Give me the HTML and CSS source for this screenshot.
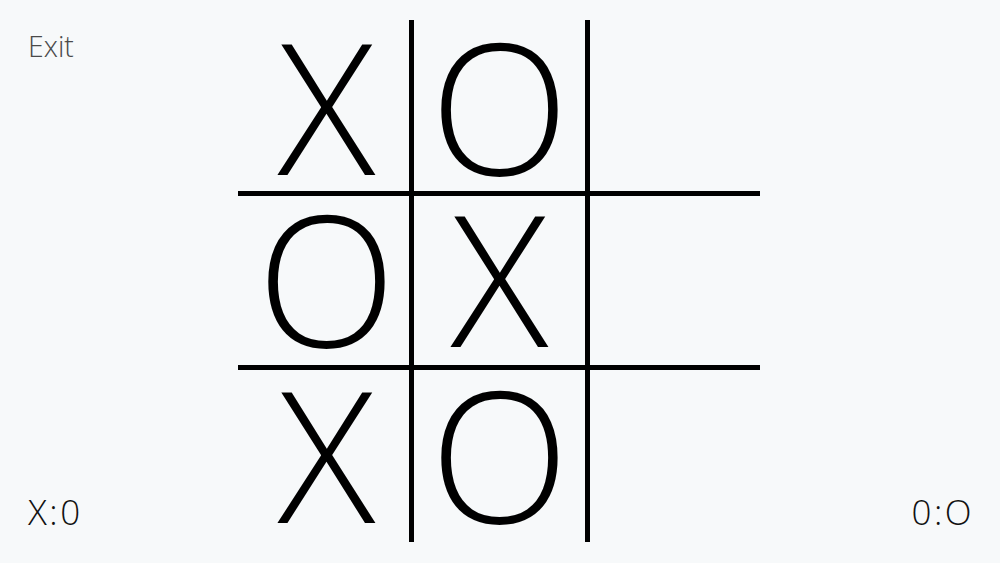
FILE: index.html
```html
<!DOCTYPE html>
<html lang="en">
<head>
<meta charset="utf-8">
<title>Tic Tac Toe</title>
<link rel="stylesheet" href="styles.css">
</head>
<body>
<div class="app">
  <div class="side side-left">
    <div class="exit">Exit</div>
    <div class="score">X:0</div>
  </div>
  <div class="board">
    <div class="cell r1 c1">X</div>
    <div class="cell r1">O</div>
    <div class="cell r1"></div>
    <div class="cell r2 c1">O</div>
    <div class="cell r2">X</div>
    <div class="cell r2"></div>
    <div class="cell r3 c1">X</div>
    <div class="cell r3">O</div>
    <div class="cell r3"></div>
  </div>
  <div class="side side-right">
    <div class="score score-right">0:O</div>
  </div>
</div>
</body>
</html>
```

FILE: styles.css
```css
html, body {
  margin: 0;
  padding: 0;
}

body {
  background: #f7f9fa;
  font-family: "Open Sans", "Liberation Sans", sans-serif;
  font-weight: 300;
  color: #111;
}

.app {
  width: 1000px;
  height: 563px;
  display: flex;
  flex-direction: row;
  overflow: hidden;
}

.side {
  display: flex;
  flex-direction: column;
  box-sizing: border-box;
}

.side-left {
  width: 238px;
  justify-content: space-between;
  align-items: flex-start;
  padding: 32px 0 34px 28px;
}

.side-right {
  width: 239px;
  justify-content: flex-end;
  align-items: flex-end;
  padding: 0 25px 34px 0;
}

.exit {
  font-size: 28.5px;
  line-height: 1;
  color: #4a4a4a;
}

.score {
  font-size: 35px;
  line-height: 1;
  letter-spacing: 2.5px;
  color: #111;
}

.board {
  margin-top: 20px;
  width: 522px;
  height: 522px;
  display: grid;
  grid-template-columns: 171px 171px 170px;
  grid-template-rows: 171px 169px 172px;
  gap: 5px;
  background: #000;
}

.cell {
  background: #f7f9fa;
  display: flex;
  align-items: flex-start;
  justify-content: center;
  font-size: 182px;
  line-height: 160px;
  box-sizing: border-box;
  color: #000;
}

.r1 {
  padding-top: 4px;
}

.r3 {
  padding-top: 2px;
}

.c1 {
  padding-left: 6px;
}
```
